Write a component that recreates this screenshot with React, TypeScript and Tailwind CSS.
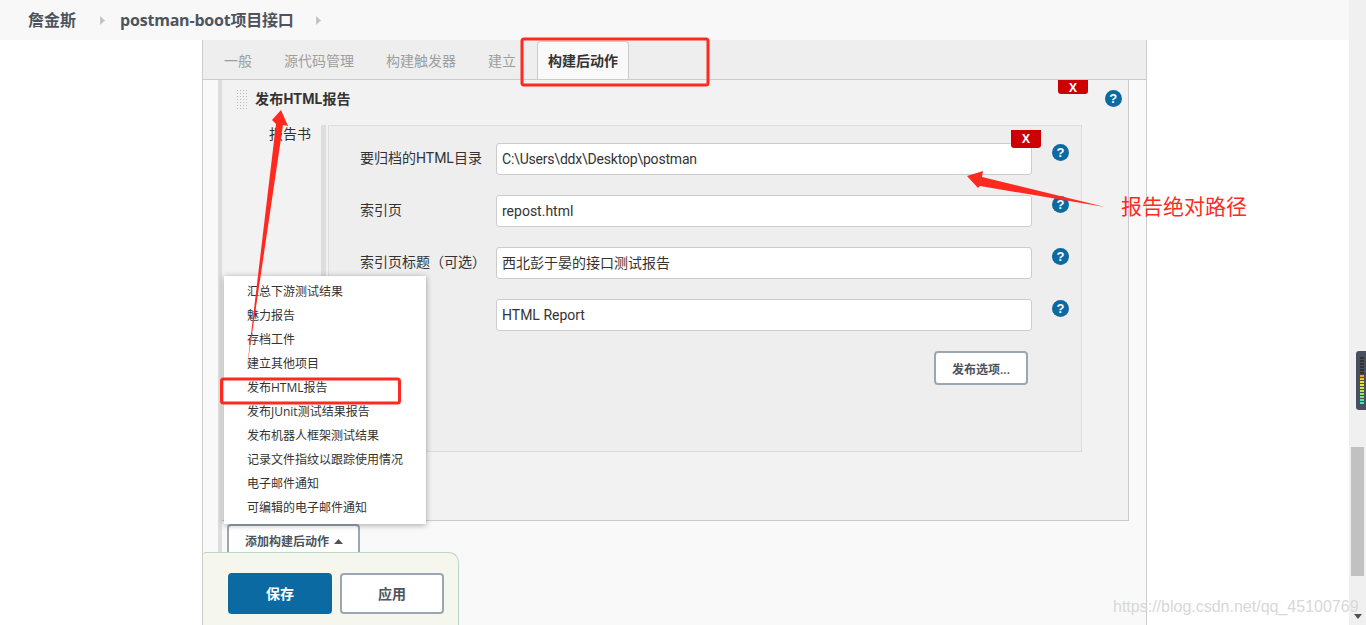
const FONT = "font-['Open_Sans','Noto_Sans_CJK_SC',sans-serif]";
const FORM = "font-['Roboto','Noto_Sans_CJK_SC',sans-serif]";

function Help() {
  return (
    <span className="flex h-[17px] w-[17px] shrink-0 items-center justify-center rounded-full bg-[#0b6aa2] font-['Liberation_Sans',sans-serif] text-[13px] font-bold leading-none text-white">
      ?
    </span>
  );
}

function Row({ label, value, top, valueClass = "" }: { label: string; value: string; top: string; valueClass?: string }) {
  return (
    <div className={`flex items-start ${top}`}>
      <div className="flex h-[32px] w-[167px] shrink-0 items-center pl-[31px] pb-[1px] text-[14px] text-[#333] whitespace-nowrap">{label}</div>
      <div className={`flex h-[32px] w-[536px] shrink-0 items-center rounded-[3px] border border-[#ccc] bg-white px-[5px] pt-[1px] text-[14px] text-[#333] ${valueClass}`}>
        {value}
      </div>
      <div className="ml-[20px] mt-[1px]">
        <Help />
      </div>
    </div>
  );
}

const menuItems = [
  "汇总下游测试结果",
  "魅力报告",
  "存档工件",
  "建立其他项目",
  "发布HTML报告",
  "发布JUnit测试结果报告",
  "发布机器人框架测试结果",
  "记录文件指纹以跟踪使用情况",
  "电子邮件通知",
  "可编辑的电子邮件通知",
];

function Chevron({ className }: { className: string }) {
  return (
    <svg width="5" height="9" viewBox="0 0 5 9" className={className}>
      <path d="M0 0 L5 4.5 L0 9 Z" fill="#c4c4c4" />
    </svg>
  );
}

export default function App() {
  return (
    <div className={`relative flex h-[625px] w-[1366px] overflow-hidden bg-white ${FONT}`}>
      <div className="flex min-w-0 flex-1 flex-col">
        {/* breadcrumb */}
        <div className="flex h-[40px] shrink-0 items-center bg-[#f8f8f8] pl-[28px] text-[16px] font-bold text-[#4d545d]">
          <span>詹金斯</span>
          <Chevron className="ml-[24px]" />
          <span className="ml-[15px] tracking-[-0.2px]">postman-boot项目接口</span>
          <Chevron className="ml-[22px]" />
        </div>

        {/* form panel */}
        <div className="ml-[202px] flex h-[585px] w-[945px] flex-col border-x border-[#ccc] bg-[#f9f9f9]">
          <div className="flex h-[40px] shrink-0 items-end border-b border-[#ccc] bg-[#eeeeee] pl-[21px] text-[14px] text-[#9e9e9e]">
            <span className="mb-[8px]">一般</span>
            <span className="mb-[8px] ml-[32px]">源代码管理</span>
            <span className="mb-[8px] ml-[32px]">构建触发器</span>
            <span className="mb-[8px] ml-[32px]">建立</span>
            <span className="ml-[21px] flex h-[38px] w-[92px] items-center justify-center rounded-t-[4px] border border-b-0 border-[#ccc] bg-[#f9f9f9] text-[14px] font-bold text-[#333]">
              构建后动作
            </span>
          </div>

          <div className="ml-[15px] flex flex-col border-l-[4px] border-[#ddd]">
            <div className={`h-[441px] w-[907px] border-r border-b border-[#ccc] bg-[#f2f2f2] ${FORM}`}>
              <div className="flex h-[45px] items-start pl-[14px] pt-[9px]">
                <span className="h-[20px] w-[11px] bg-[radial-gradient(#bbb_1px,transparent_1px)] bg-[length:3px_3px]" />
                <span className="ml-[8px] text-[14px] font-bold leading-[20px] tracking-[0.2px] text-[#333]">发布HTML报告</span>
                <span className="ml-[754px] mt-[1px]">
                  <Help />
                </span>
              </div>
              <div className="flex">
                <div className="mt-[-1px] w-[99px] shrink-0 pl-[47px] text-[14px] leading-[20px] text-[#333]">报告书</div>
                <div className="w-[5px] shrink-0 bg-[#ddd]" />
                <div className="ml-[2px] h-[327px] w-[754px] border border-[#ddd] bg-[#eeeeee]">
                  <Row top="mt-[17px]" label="要归档的HTML目录" value="C:\Users\ddx\Desktop\postman" valueClass="tracking-[-0.2px]" />
                  <Row top="mt-[20px]" label="索引页" value="repost.html" />
                  <Row top="mt-[20px]" label="索引页标题（可选）" value="西北彭于晏的接口测试报告" />
                  <Row top="mt-[20px]" label="" value="HTML Report" />
                  <div className="mt-[20px] flex justify-end pr-[53px]">
                    <span className={`flex h-[34px] w-[94px] items-center justify-center rounded-[4px] border-2 border-[#9aa7b2] bg-white pt-[3px] text-[12px] font-semibold text-[#4d545d] ${FONT}`}>
                      发布选项...
                    </span>
                  </div>
                </div>
              </div>
            </div>
            <div className="ml-[5px] mt-[3px] flex h-[33px] w-[133px] items-center gap-[5px] rounded-[4px] border-2 border-[#9aa7b2] bg-white pl-[16px] pt-[2px] text-[12px] font-semibold text-[#4d545d]">
              添加构建后动作
              <svg width="9" height="5" viewBox="0 0 9 5">
                <path d="M0 5 L4.5 0 L9 5 Z" fill="#4d545d" />
              </svg>
            </div>
          </div>
        </div>
      </div>

      {/* scrollbar */}
      <div className="flex w-[17px] shrink-0 flex-col items-center bg-[#f0f0f0] pt-[447px]">
        <div className="h-[129px] w-[13px] bg-[#c1c1c1]" />
        <svg width="8" height="5" viewBox="0 0 8 5" className="mt-[38px]">
          <path d="M0 0 H8 L4 5 Z" fill="#505050" />
        </svg>
      </div>

      {/* remove buttons */}
      <span className="absolute left-[1058px] top-[80px] flex h-[14px] w-[30px] items-end justify-center rounded-b-[3px] bg-[#cc0003] text-[12px] font-bold leading-none text-white">
        X
      </span>
      <span className="absolute left-[1011px] top-[130px] flex h-[18px] w-[30px] items-center justify-center rounded-b-[3px] bg-[#cc0003] text-[12px] font-bold leading-none text-white">
        X
      </span>

      {/* dropdown menu */}
      <div className="absolute left-[224px] top-[276px] w-[202px] bg-white py-[4px] shadow-[0_1px_6px_rgba(0,0,0,0.35)]">
        {menuItems.map((m) => (
          <div key={m} className="flex h-[24px] items-center pl-[23px] text-[12px] text-[#333] whitespace-nowrap">
            {m}
          </div>
        ))}
      </div>

      {/* sticky save bar */}
      <div className="absolute left-[203px] top-[552px] flex h-[73px] w-[256px] gap-[8px] rounded-t-[10px] rounded-tl-[3px] border border-b-0 border-l-0 border-[#b8d8c2] bg-[#f5f7ef] pl-[25px] pt-[20px]">
        <span className="flex h-[41px] w-[104px] items-center justify-center rounded-[4px] bg-[#0b6aa2] text-[14px] font-bold text-white">
          保存
        </span>
        <span className="flex h-[41px] w-[104px] items-center justify-center rounded-[4px] border-2 border-[#9aa7b2] bg-white text-[14px] font-semibold text-[#4d545d]">
          应用
        </span>
      </div>

      {/* meter widget */}
      <div className="absolute left-[1356px] top-[351px] flex h-[59px] w-[10px] flex-col items-end gap-[1px] rounded-l-[3px] bg-[#4a4f5e] py-[6px] pr-[2px]">
        {["#333","#333","#333","#333","#333","#333","#f5a623","#f5c623","#f0e020","#e8e830","#d0e840","#b0e850","#90e860","#70e880","#50e8a0","#40e8c0"].map((c, i) => (
          <span key={i} className="h-[2px] w-[4px]" style={{ backgroundColor: c }} />
        ))}
      </div>

      {/* annotations */}
      <svg className="pointer-events-none absolute left-0 top-0" width="1366" height="625" viewBox="0 0 1366 625">
        <rect x="522" y="39" width="186" height="46" rx="2" fill="none" stroke="#ff2a1f" strokeWidth="3" />
        <rect x="221.500" y="379" width="178" height="24" rx="2" fill="none" stroke="#ff2a1f" strokeWidth="3" />
        <polygon points="1105,207 982,177 983,171 967,176 978,188 980,186" fill="#ff2a1f" />
        <polygon points="247,368 276,124 272,120 281,110 288,126 283,125" fill="#ff2a1f" />
      </svg>
      <span className="absolute left-[1121px] top-[192px] text-[21px] leading-[28px] text-[#ff2a1f]">报告绝对路径</span>

      {/* watermark */}
      <span className="pointer-events-none absolute left-[1113px] top-[596px] font-['Liberation_Sans',sans-serif] text-[16px] leading-[22px] text-[#d8d8d8] whitespace-nowrap">
        https://blog.csdn.net/qq_45100769
      </span>
    </div>
  );
}
